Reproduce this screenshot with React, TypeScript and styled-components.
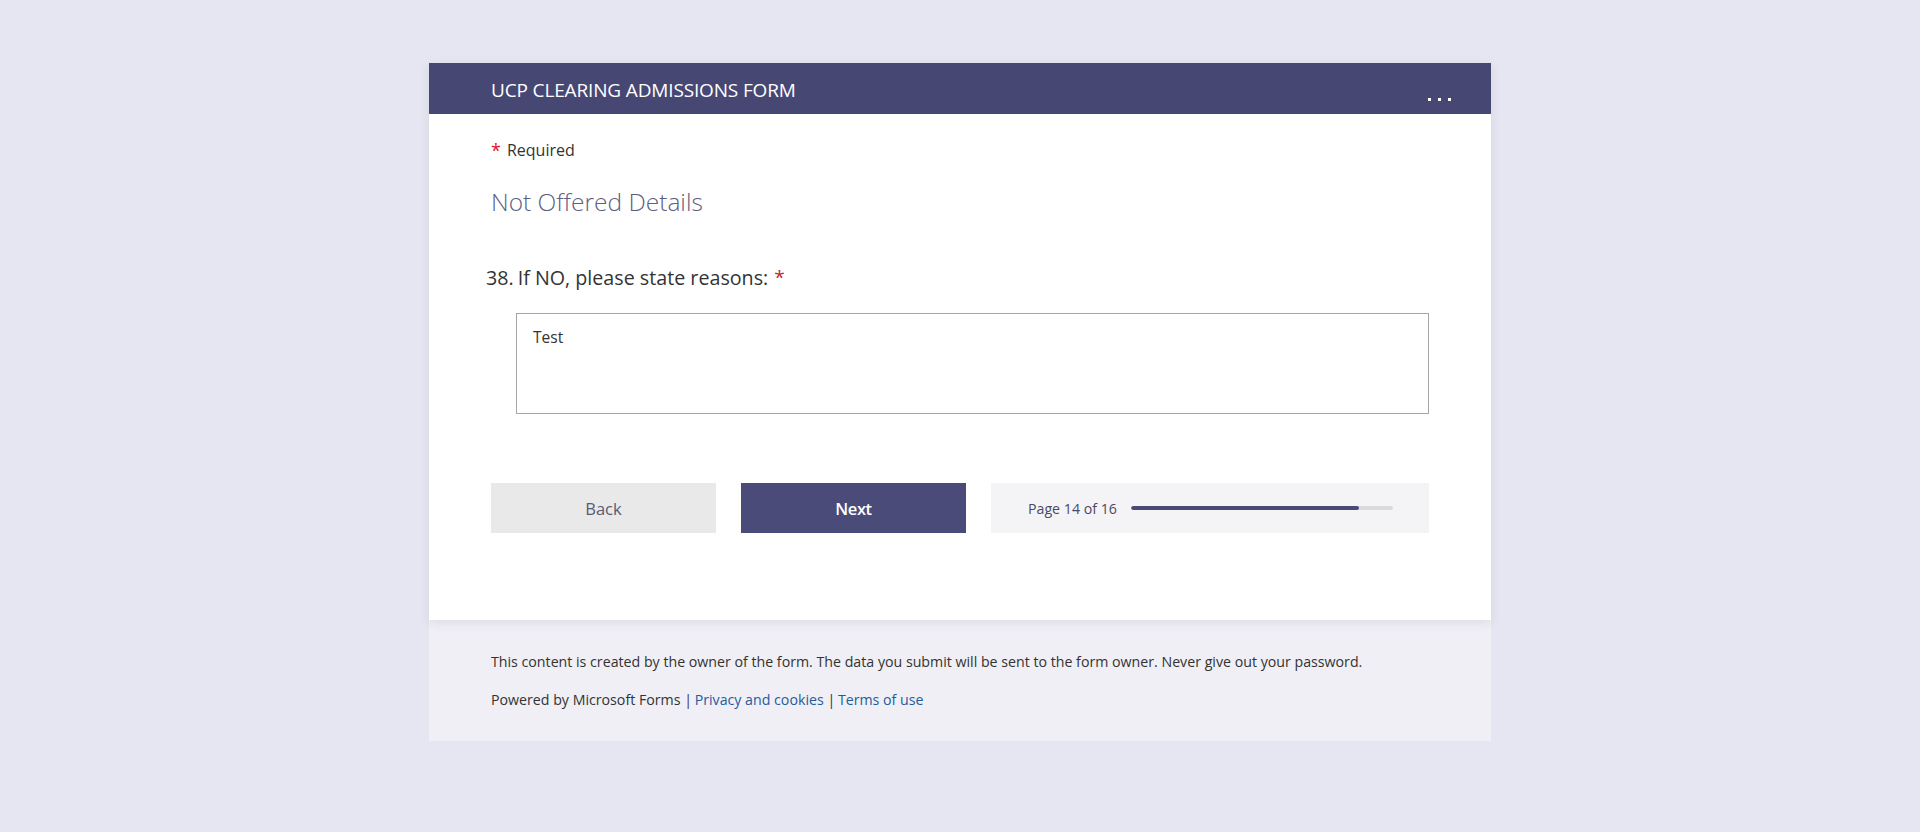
import React from "react";
import styled, { createGlobalStyle } from "styled-components";

const GlobalStyle = createGlobalStyle`
  html, body {
    margin: 0;
    padding: 0;
    background: #e6e6f2;
    font-family: "Open Sans", "Noto Sans", "Liberation Sans", sans-serif;
    color: #333333;
  }
  * { box-sizing: border-box; }
`;

const Page = styled.div`
  min-height: 832px;
  padding-top: 63px;
  display: flex;
  flex-direction: column;
  align-items: center;
`;

const Card = styled.main`
  width: 1062px;
  background: #ffffff;
  box-shadow: 0 3px 10px rgba(40, 40, 90, 0.09);
  position: relative;
  z-index: 1;
`;

const Header = styled.header`
  height: 51px;
  background: #474774;
  display: flex;
  align-items: center;
  justify-content: space-between;
  padding: 0 40px 0 62px;
`;

const Title = styled.h1`
  margin: 0;
  font-size: 19px;
  font-weight: 400;
  color: #ffffff;
  letter-spacing: -0.15px;
  line-height: 26px;
  padding-top: 2px;
`;

const MoreButton = styled.button`
  align-self: flex-end;
  margin-bottom: 13px;
  border: none;
  background: transparent;
  padding: 0;
  display: flex;
  gap: 7px;
  cursor: pointer;
`;

const Dot = styled.span`
  width: 3px;
  height: 3px;
  background: #ffffff;
  display: block;
`;

const Body = styled.div`
  padding: 25px 62px 87px 62px;
  display: flex;
  flex-direction: column;
`;

const RequiredNote = styled.div`
  font-size: 16px;
  line-height: 22px;
  color: #333333;
  display: flex;
  gap: 6px;
`;

const Star = styled.span<{ $tone?: "bright" | "deep" }>`
  color: ${(p) => (p.$tone === "deep" ? "#c4262e" : "#e8101c")};
  font-size: ${(p) => (p.$tone === "deep" ? "19px" : "18px")};
`;

const SectionTitle = styled.h2`
  margin: 24px 0 0 0;
  font-size: 24.5px;
  font-weight: 300;
  line-height: 33px;
  color: #5e5e80;
`;

const Question = styled.div`
  margin: 46px 0 0 -5px;
  font-size: 19.7px;
  line-height: 27px;
  color: #333333;
  display: flex;
  gap: 4px;
`;

const QNumber = styled.span``;

const QText = styled.span`
  display: flex;
  gap: 6px;
`;

const Answer = styled.textarea`
  margin: 22px 0 0 25px;
  height: 101px;
  border: 1px solid #a6a6a6;
  padding: 12px 16px;
  font-family: inherit;
  font-size: 15.5px;
  line-height: 22px;
  color: #333333;
  resize: none;
  outline: none;
  background: #ffffff;
`;

const Actions = styled.div`
  margin-top: 69px;
  display: grid;
  grid-template-columns: 225px 225px 1fr;
  gap: 25px;
  height: 50px;
`;

const ActionButton = styled.button<{ $primary?: boolean }>`
  border: none;
  font-family: inherit;
  font-size: 16.5px;
  font-weight: ${(p) => (p.$primary ? 600 : 400)};
  letter-spacing: ${(p) => (p.$primary ? "-0.4px" : "0")};
  background: ${(p) => (p.$primary ? "#4b4b7a" : "#e9e9e9")};
  color: ${(p) => (p.$primary ? "#ffffff" : "#5a5a72")};
  cursor: pointer;
`;

const Progress = styled.div`
  background: #f4f4f6;
  display: flex;
  align-items: center;
  gap: 14px;
  padding: 0 36px 0 37px;
`;

const ProgressLabel = styled.span`
  font-size: 14.2px;
  color: #4a4a66;
  white-space: nowrap;
`;

const Track = styled.div`
  flex: 1;
  height: 4px;
  border-radius: 2px;
  background: #dadada;
  overflow: hidden;
`;

const Fill = styled.div`
  height: 100%;
  border-radius: 2px;
  background: #4a4a78;
`;

const Footer = styled.footer`
  width: 1062px;
  background: #efeff5;
  padding: 32px 62px 31px 62px;
  display: flex;
  flex-direction: column;
  gap: 18px;
  font-size: 14.2px;
  line-height: 20px;
  color: #333333;
`;

const FooterLine = styled.p`
  margin: 0;
`;

const Sep = styled.span`
  margin: 0 1px;
  letter-spacing: -1px;
`;

const Link = styled.a`
  color: #1f5c9e;
  text-decoration: none;
`;

export default function App() {
  const current = 14;
  const total = 16;
  return (
    <>
      <GlobalStyle />
      <Page>
        <Card>
          <Header>
            <Title>UCP CLEARING ADMISSIONS FORM</Title>
            <MoreButton aria-label="More options">
              <Dot />
              <Dot />
              <Dot />
            </MoreButton>
          </Header>
          <Body>
            <RequiredNote>
              <Star>*</Star>
              <span>Required</span>
            </RequiredNote>
            <SectionTitle>Not Offered Details</SectionTitle>
            <Question>
              <QNumber>38.</QNumber>
              <QText>
                <span>If NO, please state reasons:</span>
                <Star $tone="deep">*</Star>
              </QText>
            </Question>
            <Answer defaultValue="Test" />
            <Actions>
              <ActionButton>Back</ActionButton>
              <ActionButton $primary>Next</ActionButton>
              <Progress>
                <ProgressLabel>
                  Page {current} of {total}
                </ProgressLabel>
                <Track>
                  <Fill style={{ width: `${(current / total) * 100 * 0.994}%` }} />
                </Track>
              </Progress>
            </Actions>
          </Body>
        </Card>
        <Footer>
          <FooterLine>
            This content is created by the owner of the form. The data you submit will be sent to the form owner. Never give out your password.
          </FooterLine>
          <FooterLine>
            Powered by Microsoft Forms<Sep> | </Sep><Link href="#">Privacy and cookies</Link><Sep> | </Sep><Link href="#">Terms of use</Link>
          </FooterLine>
        </Footer>
      </Page>
    </>
  );
}
